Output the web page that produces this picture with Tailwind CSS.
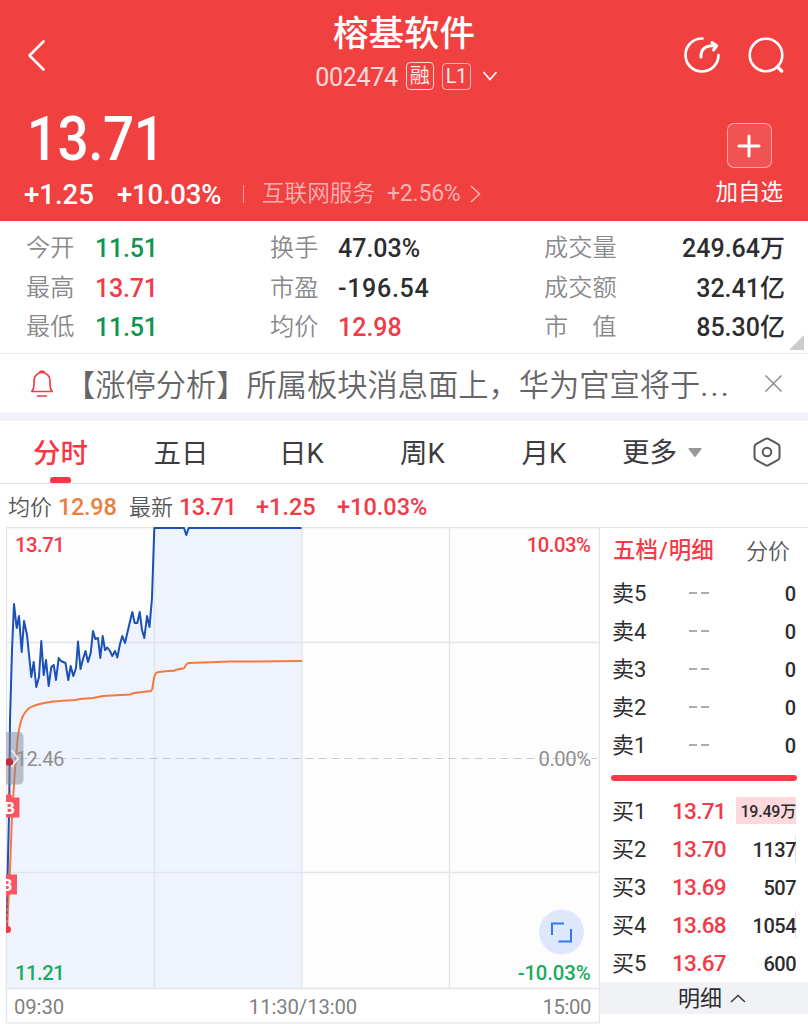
<!DOCTYPE html>
<html lang="zh-CN">

<head>
    <meta charset="UTF-8">
    <meta name="viewport" content="width=device-width, initial-scale=1.0">
    <title>榕基软件 002474</title>
    <script src="https://cdn.jsdelivr.net/npm/@tailwindcss/browser@4"></script>
</head>

<body class="bg-white">

    <main class="w-[808px] h-[1024px] overflow-hidden whitespace-nowrap bg-white text-[#2d2d2f] font-[Roboto,'Noto_Sans_CJK_SC',sans-serif]">

        <!-- header -->
        <header class="h-[221px] bg-[#f04040] text-white">
            <div class="flex h-[102px] justify-between">
                <div class="w-[240px] pt-[38px] pl-[26px]">
                    <svg class="h-9 w-6" viewBox="0 0 24 36" fill="none" stroke="currentColor" stroke-width="2.6" stroke-linecap="round" stroke-linejoin="round"><path d="M17.500 3.500 3.500 17.500 17.500 31.500" /></svg>
                </div>
                <div class="flex flex-col items-center">
                    <h1 class="h-[60px] text-[35.500px] leading-[68px] font-medium">榕基软件</h1>
                    <div class="flex h-[32px] items-center pl-[5px]">
                        <span class="mr-[8px] pt-[3px] text-[25px] leading-8 tracking-[-0.300px] text-white/80">002474</span>
                        <span class="mr-[8px] flex h-[28px] w-[28px] items-center justify-center rounded-[4px] border border-white/80 text-[20px] leading-none text-white/90">融</span>
                        <span class="mr-[11px] flex h-[27px] w-[29px] items-center justify-center rounded-[4px] border border-white/60 text-[20px] leading-none tracking-[-0.500px] text-white/90">L1</span>
                        <svg class="h-[10px] w-[16px]" viewBox="0 0 16 10" fill="none" stroke="currentColor" stroke-width="1.600"><path d="m1.500 1 6.500 7.500L14.500 1" /></svg>
                    </div>
                </div>
                <div class="flex w-[240px] justify-end gap-[25px] pt-[35px] pr-[21px]">
                    <svg class="h-10 w-10" viewBox="0 0 40 40" fill="none" stroke="currentColor" stroke-width="2.700" stroke-linecap="round" stroke-linejoin="round">
                        <path d="M20.500 3.500A16.500 16.500 0 1 0 36.500 20" />
                        <path d="M19 22C19 14 22.500 10.500 34 10.500M30 7.500l4.700 3.300L31.500 15" stroke-width="3" />
                    </svg>
                    <svg class="h-10 w-10" viewBox="0 0 40 40" fill="none" stroke="currentColor" stroke-width="2.600" stroke-linecap="round">
                        <circle cx="19" cy="20" r="16.300" />
                        <path d="m30.500 32 4.200 4" stroke-width="3.400" />
                    </svg>
                </div>
            </div>
            <div class="flex justify-between pr-[25px] pl-[24px]">
                <div>
                    <div class="h-[72px] origin-left scale-x-90 pl-[3px] text-[61px] leading-[74px] font-medium tracking-[-0.500px]">13.71</div>
                    <div class="flex h-[40px] items-center">
                        <span class="w-[93px] pt-[1px] text-[27.500px] font-medium">+1.25</span>
                        <span class="w-[126px] pt-[1px] text-[27.500px] font-medium tracking-[-0.200px]">+10.03%</span>
                        <span class="mr-[18px] h-[18px] w-px bg-white/50"></span>
                        <span class="mr-[12px] text-[22.600px] text-white/60 font-[350]">互联网服务</span>
                        <span class="pt-[1px] text-[23px] text-white/60 tracking-[-0.200px]">+2.56%</span>
                        <svg class="ml-[9px] h-[18px] w-[11px] text-white/60" viewBox="0 0 11 18" fill="none" stroke="currentColor" stroke-width="1.600"><path d="m1 1 8.500 8L1 17" /></svg>
                    </div>
                </div>
                <div class="flex flex-col items-center pt-[21px]">
                    <div class="flex h-[45px] w-[45px] items-center justify-center rounded-[7px] border border-white/50 bg-white/10">
                        <svg class="h-6 w-6" viewBox="0 0 24 24" stroke="currentColor" stroke-width="3" stroke-linecap="round"><path d="M12 2v20M2 12h20" /></svg>
                    </div>
                    <div class="mt-[6px] text-[22.500px] leading-[36px]">加自选</div>
                </div>
            </div>
        </header>

        <!-- key figures -->
        <section class="relative flex h-[133px] border-b border-[#ececee] pt-[7px] text-[25px] leading-[39.700px] font-medium">
            <div class="w-[69px] pt-[1px] pl-[26px] text-[24.200px] font-[350] text-[#8a8a8c]">
                <div>今开</div>
                <div>最高</div>
                <div>最低</div>
            </div>
            <div class="w-[201px] pt-[1px] pl-[26px] tracking-[-0.200px]">
                <div class="text-[#0f9550]">11.51</div>
                <div class="text-[#f33a48]">13.71</div>
                <div class="text-[#0f9550]">11.51</div>
            </div>
            <div class="w-[68px] pt-[1px] text-[24.200px] font-[350] text-[#8a8a8c]">
                <div>换手</div>
                <div>市盈</div>
                <div>均价</div>
            </div>
            <div class="w-[206px] pt-[1px]">
                <div>47.03%</div>
                <div class="tracking-[0.700px]">-196.54</div>
                <div class="text-[#f33a48]">12.98</div>
            </div>
            <div class="w-[74px] pt-[1px] text-[24.200px] font-[350] text-[#8a8a8c]">
                <div>成交量</div>
                <div>成交额</div>
                <div>市<span class="ml-6">值</span></div>
            </div>
            <div class="flex-1 pt-[1px] pr-[23px] text-right">
                <div>249.64万</div>
                <div>32.41亿</div>
                <div>85.30亿</div>
            </div>
            <svg class="absolute right-[4px] bottom-[3px] h-[15px] w-[15px]" viewBox="0 0 15 15"><path d="M15 0v15H0z" fill="#cbcbcb" /></svg>
        </section>

        <!-- notice -->
        <section class="flex h-[59px] items-center">
            <svg class="ml-[30px] h-[28px] w-[24px]" viewBox="0 0 24 28" fill="none" stroke="#f33a48" stroke-width="1.700" stroke-linecap="round" stroke-linejoin="round">
                <path d="M1.800 21.500h20.400C20.500 19.500 20 18 20 15v-4.500a8 8 0 0 0-16 0V15c0 3-.5 4.500-2.200 6.500zM9.500 2.500c.5-2 4.500-2 5 0M7.500 26h9" />
            </svg>
            <div class="ml-[11px] w-[666px] pt-[3px] text-[30.250px] leading-[59px] text-[#666668] font-[350]">【涨停分析】所属板块消息面上，华为官宣将于<span class="font-normal tracking-[2.300px]">...</span></div>
            <svg class="ml-[34px] h-[17px] w-[17px]" viewBox="0 0 17 17" stroke="#88888a" stroke-width="1.400"><path d="m.5.5 16 16M16.500.5l-16 16" /></svg>
        </section>
        <div class="h-[8px] bg-[#f1f2f7]"></div>

        <!-- period tabs -->
        <nav class="flex h-[63px] border-b border-[#e4e4e6] text-[27.500px] leading-[65px] text-[#3c3c3e]">
            <div class="relative w-[121px] text-center font-medium text-[#fa3545]">分时
                <span class="absolute bottom-0 left-[50px] h-[6px] w-[21px] rounded-t-[3px] rounded-b-[2px] bg-[#fa3545]"></span>
            </div>
            <div class="w-[120px] text-center">五日</div>
            <div class="w-[121px] text-center">日K</div>
            <div class="w-[121px] text-center">周K</div>
            <div class="w-[122px] text-center">月K</div>
            <div class="flex flex-1 items-center pl-[17px]">
                更多
                <svg class="ml-[11px] h-[9px] w-[14px]" viewBox="0 0 14 9"><path d="M1 0h12q1 0 .5 1L8 8.300q-1 1-2 0L.5 1Q0 0 1 0z" fill="#98989a" /></svg>
            </div>
            <svg class="mt-[16px] mr-[27px] h-[30px] w-[28px]" viewBox="0 0 28 30" fill="none" stroke="#58585a" stroke-width="2" stroke-linejoin="round">
                <path d="M12.500 1.800q1.500-.8 3 0l9.500 5.400q1.500.9 1.500 2.400v10.800q0 1.500-1.500 2.400l-9.500 5.400q-1.500.8-3 0L3 22.800q-1.500-.9-1.500-2.400V9.600q0-1.500 1.500-2.400z" />
                <circle cx="14" cy="15" r="4.300" />
            </svg>
        </nav>
        <div class="flex h-[43px] items-center pt-[3px] pl-[8px] text-[23.500px] leading-[43px] font-medium text-[#f33a48]">
            <span class="w-[50px] text-[22px] font-[350] text-[#58585a]">均价</span>
            <span class="w-[71px] tracking-[-0.300px] text-[#e8803f]">12.98</span>
            <span class="w-[50px] text-[22px] font-[350] text-[#58585a]">最新</span>
            <span class="w-[77px] tracking-[-0.500px]">13.71</span>
            <span class="w-[81px]">+1.25</span>
            <span>+10.03%</span>
        </div>

        <div class="flex h-[497px]">
            <!-- intraday chart, coordinates are page pixels -->
            <svg class="h-[497px] w-[600px] shrink-0 font-medium" viewBox="0 527 600 497" font-size="20.300">
                <defs>
                    <clipPath id="plot"><rect x="6" y="526" width="594" height="462" /></clipPath>
                </defs>
                <rect x="7" y="527" width="592" height="461" fill="#fdfdfe" />
                <path d="M7 988V930L9.300 800 10 720 12 650 14 604 16.700 628 19 616 21.700 652 24 621 27 635 31.300 677 33.700 662 36.300 687 39 677 41.300 641 43.700 675 46 660 48.700 686 51.300 667 53.700 665 56 680 58.700 658 61 661 65.500 663 68.300 680 70.700 666 73.300 676 76 668 78 641.500 80.500 669 83 659 85.500 651 88 662 90.700 653 93 631 95.300 639 98 638 100.300 658 102.700 636 105 650 107.300 647.500 110 651 112.300 656 115 651 117.300 657.500 120 644 122.300 636 125 643 128 630 132.300 612 134.700 623 137.300 623 139.700 612 142 630 144.300 638 147 616 149.500 627 152 598 154.300 527H302V988z" fill="#eef3fe" />
                <g stroke="#e4e5e8" stroke-width="1.300">
                    <path d="M6.500 527.500H600M6.500 642.500H599M6.500 872.500H599M6.500 988.500H599M6.500 1022.800H599" />
                    <path d="M6.500 527V1023M154.500 527V988M302 527V988M449.500 527V988M599.500 527V1023" />
                </g>
                <path d="M6.500 758.500H597" stroke="#c3cad3" stroke-width="1.200" stroke-dasharray="8 5" />

                <g clip-path="url(#plot)" fill="none" stroke-width="2" stroke-linejoin="round">
                    <path stroke="#1b50b5" d="M7 930 7.500 880 9.300 800 10 720 12 650 14 604 16.700 628 19 616 21.700 652 24 621 27 635 31.300 677 33.700 662 36.300 687 39 677 41.300 641 43.700 675 46 660 48.700 686 51.300 667 53.700 665 56 680 58.700 658 61 661 65.500 663 68.300 680 70.700 666 73.300 676 76 668 78 641.500 80.500 669 83 659 85.500 651 88 662 90.700 653 93 631 95.300 639 98 638 100.300 658 102.700 636 105 650 107.300 647.500 110 651 112.300 656 115 651 117.300 657.500 120 644 122.300 636 125 643 128 630 132.300 612 134.700 623 137.300 623 139.700 612 142 630 144.300 638 147 616 149.500 627 152 598 154.300 528H184L186.300 535 188.700 528H301.500" />
                    <path stroke="#f5793f" d="M7 930 10 870 12 815 15 770 17.500 740Q19 727 22 718 25 711 30 707.500 36 704 53 701.500L75 700 80 699 93 698 103 696 130 694.500 134 693 151 691 152.300 689 154 678Q155 673 157.500 672.200L165 671.300 174 670.800 176 669.800 184 668.300 186 665Q187 663.300 189 663L210 662.300 230 661.600 302 661" />
                    <g stroke="#e0304a" stroke-width="1.300" stroke-dasharray="3 3">
                        <path d="M9.300 762V800M7.300 893V930" />
                    </g>
                    <circle cx="7.500" cy="929.500" r="3.500" fill="#f33a48" />
                    <g fill="#f85565">
                        <circle cx="9" cy="797" r="3" />
                        <path d="M6 797.500H19.500V817.500H6z" />
                        <path d="M6 874.500H17V894.500H9l-2.500 3H6z" />
                    </g>
                    <g fill="#fff" font-size="17" font-weight="700">
                        <text x="4" y="813.500">B</text>
                        <text x="1.500" y="890.500">B</text>
                    </g>
                    <path d="M6 732H18q5.500 0 5.500 5.500V779q0 5.500-5.500 5.500H6z" fill="#828996" fill-opacity=".5" />
                    <path d="m11.500 750 6.500 8.500-6.500 8.500" stroke="#e5e8ee" stroke-width="2" />
                    <circle cx="9.300" cy="762" r="3.800" fill="#c9283a" />
                </g>

                <g letter-spacing="-.5">
                    <text x="15" y="552" fill="#f33a48">13.71</text>
                    <text x="590.500" y="552" text-anchor="end" fill="#f33a48">10.03%</text>
                    <text x="15.500" y="766" fill="#8f8f91" font-weight="400">12.46</text>
                    <text x="590.500" y="766" text-anchor="end" fill="#8f8f91" font-weight="400">0.00%</text>
                    <text x="15" y="979.500" fill="#15ad5d">11.21</text>
                    <text x="590.500" y="979.500" text-anchor="end" fill="#15ad5d" letter-spacing="-.1">-10.03%</text>
                </g>
                <g fill="#808082" font-weight="400" letter-spacing="-.1">
                    <text x="14" y="1014">09:30</text>
                    <text x="303" y="1014" text-anchor="middle">11:30/13:00</text>
                    <text x="591" y="1014" text-anchor="end" letter-spacing="-.4">15:00</text>
                </g>

                <circle cx="561.500" cy="932" r="22.500" fill="#dfe7fc" />
                <path d="M552 935V923.500H564M571 929V941.500H558.500" fill="none" stroke="#2f7cf6" stroke-width="2" />
            </svg>

            <!-- order book -->
            <aside class="w-[208px] border-t border-[#e4e4e6] text-[22px]">
                <div class="flex h-[46px] items-center justify-between pr-[18px] pl-[13px]">
                    <span class="text-[22.500px] font-medium text-[#f93a48]">五档<span class="mx-[1px]">/</span>明细</span>
                    <span class="font-[350] text-[#58585a]">分价</span>
                </div>
                <div id="asks"></div>
                <div class="flex h-[28px] items-center pr-[11px] pl-[11px]">
                    <div class="h-[6px] w-full rounded-full bg-[#f93a48]"></div>
                </div>
                <div id="bids"></div>
                <div class="flex h-[32px] items-center bg-[#f1f2f6] pl-[78px]">
                    <span>明细</span>
                    <svg class="ml-[8px] h-[9px] w-[16px]" viewBox="0 0 16 9" fill="none" stroke="#3c3c3e" stroke-width="1.600"><path d="m1 8 7-6.500L15 8" /></svg>
                </div>
            </aside>
        </div>
    </main>

    <script>
        var asks = ['卖5', '卖4', '卖3', '卖2', '卖1'];
        // label, price, volume, bar width
        var bids = [
            ['买1', '13.71', '19.49万', 60],
            ['买2', '13.70', '1137', 1],
            ['买3', '13.69', '507', 0],
            ['买4', '13.68', '1054', 1],
            ['买5', '13.67', '600', 0]
        ];

        var html = '';
        asks.forEach(function (label) {
            html += '<div class="flex h-[38px] items-center pl-[12px] pr-[12px]">';
            html += '<span class="w-[77px] pt-[1px]">' + label + '</span>';
            html += '<span class="flex gap-[4px]"><i class="h-[2px] w-[8px] bg-[#a9adb2]"></i><i class="h-[2px] w-[8px] bg-[#a9adb2]"></i></span>';
            html += '<span class="flex-1 pt-[2px] text-right text-[20px] font-medium">0</span>';
            html += '</div>';
        });
        document.getElementById('asks').innerHTML = html;

        html = '';
        bids.forEach(function (row, i) {
            html += '<div class="relative flex h-[38px] items-center pl-[12px] pr-[12px]">';
            html += '<span class="absolute right-[12px] top-[5px] h-[27px] bg-[#fdd9dd]" style="width:' + row[3] + 'px"></span>';
            html += '<span class="w-[60px] pt-[1px]">' + row[0] + '</span>';
            html += '<span class="pt-[2px] text-[22.500px] font-medium text-[#f33a48] tracking-[-0.700px]">' + row[1] + '</span>';
            html += '<span class="relative flex-1 pt-[2px] text-right ' + (i == 0 ? 'text-[16px] tracking-[-0.200px]' : 'text-[20px] tracking-[-0.500px]') + ' font-medium">' + row[2] + '</span>';
            html += '</div>';
        });
        document.getElementById('bids').innerHTML = html;
    </script>

</body>

</html>
